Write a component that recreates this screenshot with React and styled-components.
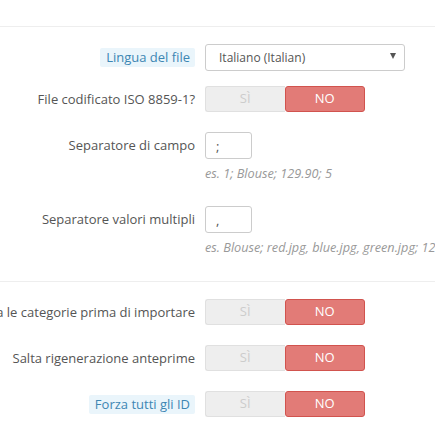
import React from "react";
import styled, { createGlobalStyle } from "styled-components";

const Global = createGlobalStyle`
  html, body { margin: 0; padding: 0; background: #fff; overflow: hidden; }
  body { font-family: "Open Sans", "Liberation Sans", sans-serif; font-size: 13px; color: #555; }
`;

const Page = styled.div`
  width: 435px;
  height: 437px;
  overflow: hidden;
`;

const TopBar = styled.div`
  height: 26px;
  border-bottom: 1px solid #eee;
`;

const Divider = styled.div`
  height: 0;
  border-top: 1px solid #eee;
  margin-top: ${(p) => p.$mt}px;
`;

const Row = styled.div`
  display: grid;
  grid-template-columns: 195px 1fr;
  column-gap: 10px;
  margin-top: ${(p) => p.$mt}px;
`;

const LabelCol = styled.div`
  display: flex;
  justify-content: flex-end;
  align-items: center;
  white-space: nowrap;
  height: ${(p) => p.$h}px;
  min-width: 0;
`;

const Label = styled.span`
  font-size: 13px;
  line-height: 19px;
  color: #555;
`;

const TipLabel = styled.span`
  font-size: 13px;
  line-height: 19px;
  color: #3d86b3;
  background: #eaf5fb;
  border-radius: 2px;
  padding: 0 5px 0 6px;
`;

const Control = styled.div`
  display: flex;
  flex-direction: column;
  align-items: flex-start;
  min-width: 0;
`;

const Select = styled.div`
  box-sizing: border-box;
  width: 200px;
  height: 27px;
  border: 1px solid #ccc;
  border-radius: 3px;
  display: flex;
  align-items: center;
  justify-content: space-between;
  padding: 0 8px 0 13px;
  font-size: 12px;
  color: #555;
`;

const Caret = styled.span`
  width: 0;
  height: 0;
  border-left: 3.5px solid transparent;
  border-right: 3.5px solid transparent;
  border-top: 6px solid #555;
  margin-top: -4px;
`;

const Toggle = styled.div`
  display: flex;
  width: 160px;
  height: 26px;
`;

const Half = styled.div`
  box-sizing: border-box;
  flex: 1;
  display: flex;
  align-items: center;
  justify-content: center;
  font-size: 13px;
  padding-bottom: 2px;
  ${(p) =>
    p.$on
      ? `background:#e27b77;border:1px solid #d1534e;color:#fff;border-radius:3px;`
      : `background:#eee;border:1px solid #e0e0e0;border-right:none;color:#ccc;border-radius:3px 0 0 3px;`}
`;

const Input = styled.div`
  box-sizing: border-box;
  width: 47px;
  height: 27px;
  border: 1px solid #ccc;
  border-radius: 3px;
  display: flex;
  align-items: center;
  padding-left: 10px;
  font-size: 13px;
  color: #555;
`;

const Help = styled.div`
  margin-top: 6px;
  font-size: 12.7px;
  line-height: 17px;
  font-style: italic;
  color: #999;
  white-space: nowrap;
`;

const Switch = () => (
  <Toggle>
    <Half>SÌ</Half>
    <Half $on>NO</Half>
  </Toggle>
);

export default function App() {
  return (
    <Page>
      <Global />
      <TopBar />
      <Row $mt={17}>
        <LabelCol $h={27}>
          <TipLabel>Lingua del file</TipLabel>
        </LabelCol>
        <Control>
          <Select>
            <span>Italiano (Italian)</span>
            <Caret />
          </Select>
        </Control>
      </Row>
      <Row $mt={15}>
        <LabelCol $h={26}>
          <Label>File codificato ISO 8859-1?</Label>
        </LabelCol>
        <Control>
          <Switch />
        </Control>
      </Row>
      <Row $mt={20}>
        <LabelCol $h={27}>
          <Label>Separatore di campo</Label>
        </LabelCol>
        <Control>
          <Input>;</Input>
          <Help>es. 1; Blouse; 129.90; 5</Help>
        </Control>
      </Row>
      <Row $mt={24}>
        <LabelCol $h={27}>
          <Label>Separatore valori multipli</Label>
        </LabelCol>
        <Control>
          <Input>,</Input>
          <Help>es. Blouse; red.jpg, blue.jpg, green.jpg; 129.90</Help>
        </Control>
      </Row>
      <Divider $mt={25} />
      <Row $mt={17}>
        <LabelCol $h={26}>
          <Label>Elimina le categorie prima di importare</Label>
        </LabelCol>
        <Control>
          <Switch />
        </Control>
      </Row>
      <Row $mt={20}>
        <LabelCol $h={26}>
          <Label>Salta rigenerazione anteprime</Label>
        </LabelCol>
        <Control>
          <Switch />
        </Control>
      </Row>
      <Row $mt={20}>
        <LabelCol $h={26}>
          <TipLabel>Forza tutti gli ID</TipLabel>
        </LabelCol>
        <Control>
          <Switch />
        </Control>
      </Row>
    </Page>
  );
}
